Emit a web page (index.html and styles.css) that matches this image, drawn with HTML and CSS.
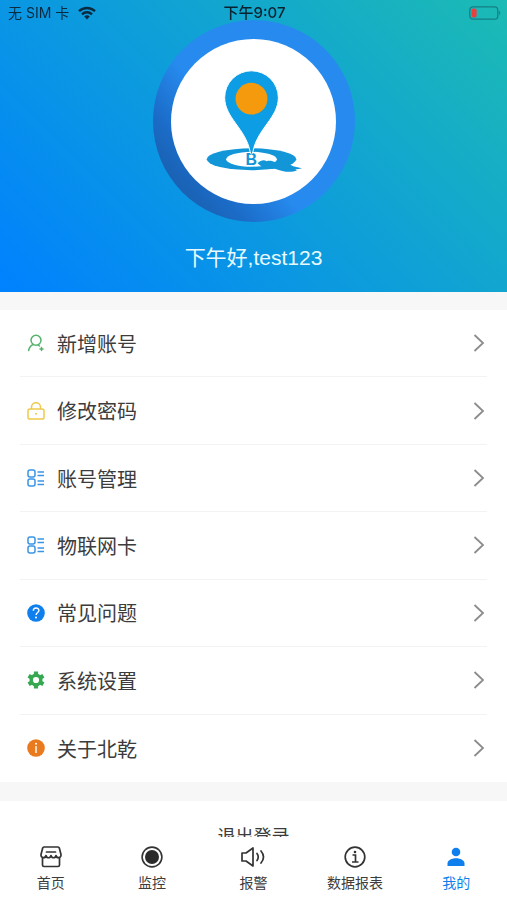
FILE: index.html
```
<!DOCTYPE html>
<html lang="zh-CN">
<head>
    <meta charset="UTF-8">
    <meta name="viewport" content="width=device-width, initial-scale=1.0">
    <title>我的</title>
    <link rel="stylesheet" href="styles.css">
</head>
<body>
    <!-- 状态栏 -->
    <div class="status-bar">
        <div class="carrier">
            <span>无 SIM 卡</span>
            <svg width="18" height="14" viewBox="0 0 18 14" fill="none" stroke="#0b2a40" stroke-width="2.4">
                <path d="M1 5.2a11.5 11.5 0 0 1 16 0"/>
                <path d="M4 8.3a7.2 7.2 0 0 1 10 0"/>
                <path d="M9 13.4 6.2 10.6a4 4 0 0 1 5.6 0z" fill="#0b2a40" stroke="none"/>
            </svg>
        </div>
        <div class="time">下午9:07</div>
        <div class="battery">
            <svg width="32" height="14" viewBox="0 0 32 14">
                <rect x="0.8" y="0.8" width="28" height="12.4" rx="3.2" fill="none" stroke="#157f83" stroke-width="1.3"/>
                <rect x="2.6" y="2.6" width="5" height="8.8" rx="1.6" fill="#e8403f"/>
                <path d="M30.2 4.8c1.4.6 1.4 3.8 0 4.4z" fill="#157f83"/>
            </svg>
        </div>
    </div>

    <main class="content">
        <!-- 头像 -->
        <header class="profile">
            <div class="avatar">
                <svg viewBox="0 0 166 166">
                    <ellipse cx="81" cy="121" rx="45" ry="11" fill="#1296d8"/>
                    <path d="M96 128c8-4 16-6 22-5 1 3 3 4 5 5 3 1 5 1 9 2-4 1-5 1-7 1 1 1 1 1 2 1-4 2-10 2-14 1-5-1-10-3-17-5z" fill="#1296d8"/>
                    <ellipse cx="81" cy="121" rx="25.5" ry="7.5" fill="#fff"/>
                    <path d="M87 125c3-3 7-4 9-2 3-1 7 0 9 1l-5 4-8 1z" fill="#1296d8"/>
                    <text x="75" y="127" class="logo-letter">B</text>
                    <path d="M81 32a27 27 0 0 0-27 27c0 20 21 31 25.5 54q1.500 6 3 0C87 90 108 79 108 59a27 27 0 0 0-27-27z" fill="#0c9de4" stroke="#fff"/>
                    <circle cx="81" cy="60" r="16" fill="#f59a0c"/>
                </svg>
            </div>
            <p class="greeting">下午好,test123</p>
        </header>

        <!-- 菜单列表 -->
        <nav class="menu">
            <a href="#" class="menu-item">
                <svg class="icon" viewBox="0 0 18 18" fill="none" stroke="#55b36c" stroke-width="1.5" stroke-linecap="round">
                    <circle cx="9" cy="6.2" r="5"/>
                    <path d="M6.2 10.5C3.5 11.5 2.2 13.5 1.6 16.5M11 11l1.500 1M14.500 13.500v3M13 15h3"/>
                </svg>
                <span class="label">新增账号</span>
                <svg class="arrow" viewBox="0 0 12 20"><path d="M1.5 2l8.5 8-8.5 8"/></svg>
            </a>
            <a href="#" class="menu-item">
                <svg class="icon" viewBox="0 0 18 18" fill="none" stroke="#efc94c" stroke-width="1.5">
                    <rect x="1" y="7" width="16" height="10" rx="1.8"/>
                    <path d="M4.5 7V5.2a4.500 4.500 0 0 1 9 0V7"/>
                    <circle cx="9" cy="11.8" r="1" fill="#efc94c" stroke="none"/>
                </svg>
                <span class="label">修改密码</span>
                <svg class="arrow" viewBox="0 0 12 20"><path d="M1.5 2l8.5 8-8.5 8"/></svg>
            </a>
            <a href="#" class="menu-item">
                <svg class="icon" viewBox="0 0 18 18" fill="none" stroke="#3a94e6" stroke-width="1.5">
                    <rect x="1" y="1" width="7" height="7" rx="2"/>
                    <rect x="1" y="10" width="7" height="7" rx="2"/>
                    <path d="M10.5 3h6.500M10.5 6.500h6.500M10.5 12h6.500M10.5 15.500h6.500"/>
                </svg>
                <span class="label">账号管理</span>
                <svg class="arrow" viewBox="0 0 12 20"><path d="M1.5 2l8.5 8-8.5 8"/></svg>
            </a>
            <a href="#" class="menu-item">
                <svg class="icon" viewBox="0 0 18 18" fill="none" stroke="#3a94e6" stroke-width="1.5">
                    <rect x="1" y="1" width="7" height="7" rx="2"/>
                    <rect x="1" y="10" width="7" height="7" rx="2"/>
                    <path d="M10.5 3h6.500M10.5 6.500h6.500M10.5 12h6.500M10.5 15.500h6.500"/>
                </svg>
                <span class="label">物联网卡</span>
                <svg class="arrow" viewBox="0 0 12 20"><path d="M1.5 2l8.5 8-8.5 8"/></svg>
            </a>
            <a href="#" class="menu-item">
                <svg class="icon" viewBox="0 0 18 18">
                    <circle cx="9" cy="9" r="8.8" fill="#0f7fee"/>
                    <path d="M6.3 6.8c0-3.8 5.6-3.6 5.6-.3 0 2-2.8 2.2-2.8 4.6" fill="none" stroke="#fff" stroke-width="1.4"/>
                    <circle cx="9" cy="13.6" r="1" fill="#fff"/>
                </svg>
                <span class="label">常见问题</span>
                <svg class="arrow" viewBox="0 0 12 20"><path d="M1.5 2l8.5 8-8.5 8"/></svg>
            </a>
            <a href="#" class="menu-item">
                <svg class="icon" viewBox="0 0 18 18" fill="none" stroke="#36a852">
                    <circle cx="9" cy="9" r="4.8" stroke-width="3.4"/>
                    <path d="M9 .6v3M9 14.400v3M1.600 4.800l2.800 1.600M13.600 11.600l2.800 1.600M1.600 13.200l2.800-1.600M13.600 6.400l2.800-1.600" stroke-width="4.200"/>
                </svg>
                <span class="label">系统设置</span>
                <svg class="arrow" viewBox="0 0 12 20"><path d="M1.5 2l8.5 8-8.5 8"/></svg>
            </a>
            <a href="#" class="menu-item">
                <svg class="icon" viewBox="0 0 18 18">
                    <circle cx="9" cy="9" r="8.8" fill="#ea7a1e"/>
                    <circle cx="9" cy="4.8" r="1" fill="#fff"/>
                    <path d="M9 7v7" stroke="#fff" stroke-width="1.4"/>
                </svg>
                <span class="label">关于北乾</span>
                <svg class="arrow" viewBox="0 0 12 20"><path d="M1.5 2l8.5 8-8.5 8"/></svg>
            </a>
        </nav>

        <button type="button" class="logout">退出登录</button>
    </main>

    <!-- 底部导航 -->
    <nav class="tab-bar">
        <a href="#" class="tab">
            <svg viewBox="0 0 24 24" fill="none" stroke="#333" stroke-width="1.7" stroke-linejoin="round" stroke-linecap="round">
                <path d="M5 2h14q1 0 1.300 1L22 9.500c.5 4-4.500 4-5 1-.8 3-4.200 3-5 0-.8 3-4.200 3-5 0-.5 3-5.500 3-5-1L3.700 3Q4 2 5 2zM7.500 7h9"/>
                <path d="M3.500 13v7q0 1.500 1.500 1.500h14q1.500 0 1.500-1.500v-7"/>
            </svg>
            <span>首页</span>
        </a>
        <a href="#" class="tab">
            <svg viewBox="0 0 24 24">
                <circle cx="12" cy="12" r="9.9" fill="none" stroke="#333" stroke-width="1.6"/>
                <circle cx="12" cy="12" r="7" fill="#2b2b2b"/>
            </svg>
            <span>监控</span>
        </a>
        <a href="#" class="tab">
            <svg viewBox="0 0 24 24" fill="none" stroke="#333" stroke-width="1.7" stroke-linejoin="round" stroke-linecap="round">
                <path d="M1 8h4l7-5v18l-7-5H1z"/>
                <path d="M16 8.500q2.500 3.500 0 7M20 6q5 6 0 12"/>
            </svg>
            <span>报警</span>
        </a>
        <a href="#" class="tab">
            <svg viewBox="0 0 24 24" fill="none" stroke="#333" stroke-width="1.7">
                <circle cx="12" cy="12" r="9.8"/>
                <path d="M9.500 10h3v6.500M9 17h6.500"/>
                <circle cx="12" cy="7" r="1.3" fill="#333" stroke="none"/>
            </svg>
            <span>数据报表</span>
        </a>
        <a href="#" class="tab active">
            <svg viewBox="0 0 24 24" fill="#0f7fee">
                <circle cx="12" cy="7" r="4.3"/>
                <path d="M3.500 21v-2.500c0-3 4-5.200 8.500-5.200s8.500 2.200 8.500 5.200V21z"/>
            </svg>
            <span>我的</span>
        </a>
    </nav>
</body>
</html>
```
FILE: styles.css
```
* {
    box-sizing: border-box;
}

body {
    margin: 0;
    height: 100vh;
    display: flex;
    flex-direction: column;
    background: #fff;
    color: #3c3c3c;
    font-family: "Liberation Sans", "Noto Sans CJK SC", sans-serif;
}

a {
    color: inherit;
    text-decoration: none;
}

/* 状态栏浮在头部上方 */
.status-bar {
    position: absolute;
    top: 0;
    left: 0;
    right: 0;
    height: 26px;
    padding: 0 6px 0 8px;
    display: grid;
    grid-template-columns: 1fr auto 1fr;
    align-items: center;
    font-family: Inter, "Noto Sans CJK SC", sans-serif;
    font-size: 14px;
    line-height: 20px;
    color: #0b2a40;
}

.carrier {
    display: flex;
    align-items: center;
    gap: 9px;
}

.time {
    font-size: 15px;
    font-weight: 500;
    color: #08222f;
}

.battery {
    display: flex;
    justify-content: flex-end;
}

.content {
    flex: 1;
    min-height: 0;
    overflow-y: auto;
    scrollbar-width: none;
    background: #f7f7f7;
}

.profile {
    padding: 20px 0 18px;
    display: flex;
    flex-direction: column;
    align-items: center;
    gap: 20px;
    background: linear-gradient(45deg, #0081ff, #1cbbb4);
}

.avatar {
    width: 202px;
    height: 202px;
    padding: 19px 19px 17px 18px;
    border-radius: 50%;
    background: linear-gradient(50deg, #1a62b4 15%, #1b6cc8 25%, #268aee 42%);
}

.avatar svg {
    display: block;
    border-radius: 50%;
    background: #fff;
}

.logo-letter {
    font-size: 16px;
    font-weight: bold;
    fill: #1296d8;
}

.greeting {
    margin: 0;
    font-size: 21px;
    line-height: 32px;
    color: #e8faff;
}

.menu {
    margin: 18px 0 19px;
    padding: 0 20px;
    min-height: 472px;
    display: grid;
    grid-auto-rows: 1fr;
    background: #fff;
}

.menu-item {
    padding: 0 2px 0 7px;
    display: flex;
    align-items: center;
    gap: 12px;
    font-size: 20px;
    border-bottom: 1px solid #f3f3f3;
}

.menu-item:last-child {
    border-bottom: none;
}

.icon {
    width: 18px;
    height: 18px;
}

.label {
    flex: 1;
}

.arrow {
    width: 12px;
    height: 20px;
    fill: none;
    stroke: #8c8c8c;
    stroke-width: 1.8;
}

.logout {
    display: block;
    width: 100%;
    height: 67px;
    padding: 0;
    border: none;
    background: #fff;
    color: #3c3c3c;
    font-family: inherit;
    font-size: 18px;
    cursor: pointer;
}

.tab-bar {
    height: 63px;
    padding-top: 8px;
    display: grid;
    grid-template-columns: repeat(5, 1fr);
    background: #fff;
}

.tab {
    display: flex;
    flex-direction: column;
    align-items: center;
    gap: 4px;
    font-size: 14px;
    line-height: 20px;
}

.tab svg {
    width: 24px;
    height: 24px;
    overflow: visible;
}

.tab.active {
    color: #0f7fee;
}
```
